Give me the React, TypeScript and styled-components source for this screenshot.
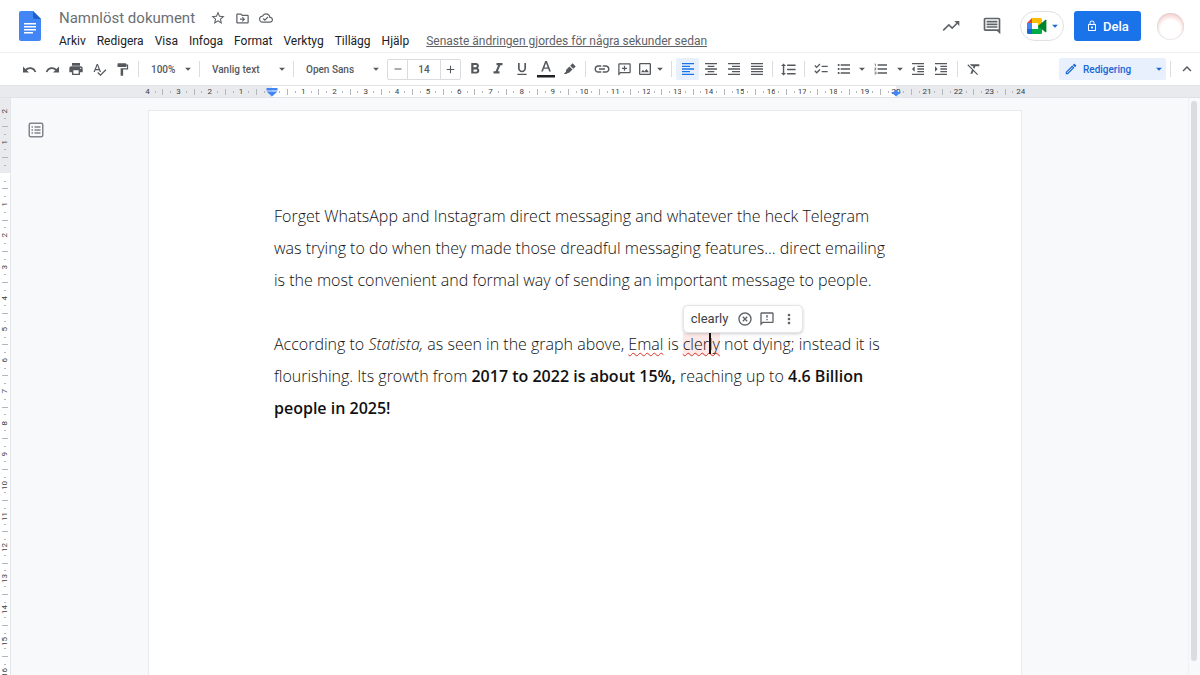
import React from "react";
import styled, { createGlobalStyle, css } from "styled-components";
import {
  MdAdd,
  MdArrowDropDown,
  MdChecklist,
  MdExpandLess,
  MdFormatAlignCenter,
  MdFormatAlignJustify,
  MdFormatAlignLeft,
  MdFormatAlignRight,
  MdFormatBold,
  MdFormatClear,
  MdFormatIndentDecrease,
  MdFormatIndentIncrease,
  MdFormatItalic,
  MdFormatLineSpacing,
  MdFormatListBulleted,
  MdFormatListNumbered,
  MdFormatUnderlined,
  MdHighlightOff,
  MdInsertLink,
  MdLockOutline,
  MdMoreVert,
  MdOutlineCloudDone,
  MdOutlineEdit,
  MdOutlineFeedback,
  MdOutlineImage,
  MdPrint,
  MdRemove,
  MdSpellcheck,
  MdStarBorder,
  MdTrendingUp,
} from "react-icons/md";

const GlobalStyle = createGlobalStyle`
  *, *::before, *::after { box-sizing: border-box; }
  body {
    margin: 0;
    background: #f8f9fb;
    color: #3c4043;
    font-family: Roboto, Arial, sans-serif;
    font-size: 11px;
  }
  button, input, select { font: inherit; color: inherit; }
  button {
    margin: 0;
    padding: 0;
    border: 0;
    background: none;
    cursor: pointer;
  }
  svg { display: block; flex: none; }
`;

const Shell = styled.div`
  display: flex;
  flex-direction: column;
  height: 100vh;
  overflow: hidden;
`;

/* ---------- header ---------- */

const Header = styled.header`
  display: flex;
  align-items: center;
  height: 53px;
  padding: 0 16px 0 19px;
  background: #fff;
  border-bottom: 1px solid #eceef0;
`;

const TitleBlock = styled.div`
  flex: 1;
  display: flex;
  flex-direction: column;
  gap: 4px;
  min-width: 0;
  padding: 6px 0 0 18px;
`;

const TitleRow = styled.div`
  display: flex;
  align-items: center;
  height: 20px;
`;

const Title = styled.h1`
  margin: 0 11px 0 0;
  font-size: 15px;
  line-height: 20px;
  font-weight: 400;
  color: #6b6f74;
`;

const TitleButton = styled.button`
  display: grid;
  place-items: center;
  width: 24px;
  height: 20px;
  color: #5f6368;
`;

const MenuBar = styled.nav`
  display: flex;
  align-items: center;
  gap: 11px;
  white-space: nowrap;
`;

const MenuItem = styled.button`
  font-size: 12px;
  line-height: 18px;
  color: #202124;
`;

const LastEdit = styled.a`
  margin-left: 6px;
  font-size: 12px;
  line-height: 18px;
  color: #5f6368;
  text-decoration: underline;
`;

const HeaderActions = styled.div`
  display: flex;
  align-items: center;
`;

const RoundButton = styled.button`
  display: grid;
  place-items: center;
  width: 41px;
  height: 30px;
  color: #5f6368;
`;

const MeetButton = styled.button`
  display: flex;
  align-items: center;
  justify-content: center;
  gap: 1px;
  width: 44px;
  height: 30px;
  margin: 0 10px 0 8px;
  padding-left: 4px;
  border: 1px solid #dfe1e5;
  border-radius: 15px;
  color: #1967d2;
`;

const ShareButton = styled.button`
  display: flex;
  align-items: center;
  justify-content: center;
  gap: 5px;
  width: 67px;
  height: 30px;
  border-radius: 3px;
  background: #1a73e8;
  color: #fff;
  font-size: 13px;
  font-weight: 500;
`;

const Avatar = styled.button`
  width: 27px;
  height: 27px;
  margin-left: 16px;
  border-radius: 50%;
  background: radial-gradient(circle at 50% 62%, #fff 45%, #f6d5d2 72%, #e9bdb9 100%);
  box-shadow: inset 0 0 2px #c9c4cc;
`;

/* ---------- toolbar ---------- */

const Toolbar = styled.div`
  display: flex;
  align-items: center;
  flex: none;
  height: 32px;
  padding: 0 2px 0 18px;
  background: #fff;
  color: #55595e;
`;

const ToolGroup = styled.div<{ $width?: number }>`
  display: flex;
  align-items: center;
  justify-content: space-between;
  flex: none;
  width: ${(p) => (p.$width ? `${p.$width}px` : "auto")};
`;

const ToolButton = styled.button<{ $active?: boolean }>`
  display: flex;
  align-items: center;
  justify-content: center;
  width: 23px;
  height: 22px;
  border-radius: 2px;
  ${(p) =>
    p.$active &&
    css`
      background: #e8f0fe;
      color: #1a73e8;
    `}
`;

const ArrowButton = styled(ToolButton)`
  width: 14px;
`;

const SplitButton = styled(ToolButton)`
  width: 31px;
`;

const Separator = styled.span`
  flex: none;
  width: 1px;
  height: 16px;
  margin: 0 4px;
  background: #dadce0;
`;

const SelectBox = styled.label<{ $width: number }>`
  position: relative;
  flex: none;
  width: ${(p) => p.$width}px;
  > svg {
    position: absolute;
    right: 0;
    top: 4px;
    pointer-events: none;
  }
`;

const Select = styled.select`
  appearance: none;
  width: 100%;
  height: 22px;
  padding: 0 14px 0 8px;
  border: 0;
  background: none;
  font-size: 10px;
  font-weight: 500;
`;

const SizeBox = styled.div`
  display: flex;
  flex: none;
  height: 21px;
  margin: 0 2px 0 4px;
  border: 1px solid #dadce0;
  border-radius: 2px;
  button {
    display: grid;
    place-items: center;
    width: 19px;
  }
  input {
    width: 34px;
    padding: 0;
    border: 0;
    border-left: 1px solid #dadce0;
    border-right: 1px solid #dadce0;
    background: none;
    text-align: center;
    font-size: 10px;
    font-weight: 500;
  }
`;

const ModeButton = styled.button`
  display: flex;
  align-items: center;
  width: 107px;
  height: 22px;
  margin-left: auto;
  padding: 0 0 0 5px;
  border-radius: 2px;
  background: #e8f0fe;
  color: #1967d2;
  font-size: 10px;
  font-weight: 500;
  span {
    flex: 1;
    padding-left: 5px;
    text-align: left;
  }
`;

/* ---------- rulers ---------- */

const RulerRow = styled.div`
  display: flex;
  justify-content: center;
  flex: none;
  height: 13px;
  padding-right: 32px;
  background: #e8eaed;
  border-top: 1px solid #e0e2e5;
  border-bottom: 1px solid #e0e2e5;
`;

const RulerTrack = styled.div`
  display: flex;
  width: 881px;
  overflow: hidden;
`;

const SideRuler = styled.div`
  flex: none;
  width: 11px;
  padding-top: 9px;
  overflow: hidden;
  background: #e8eaed;
  border-right: 1px solid #e4e6e9;
`;

const SideTrack = styled.div`
  display: flex;
  flex-direction: column;
  height: 593px;
`;

const Slot = styled.span<{ $fill: "page" | "margin" | "enter" | "leave"; $vertical?: boolean }>`
  position: relative;
  display: flex;
  align-items: center;
  justify-content: center;
  flex: 1 1 0;
  min-width: 0;
  min-height: 0;
  font-size: 8px;
  line-height: 10px;
  color: #3c4043;
  white-space: nowrap;
  background: ${(p) => {
    const dir = p.$vertical ? "to bottom" : "to right";
    if (p.$fill === "page") return "#fff";
    if (p.$fill === "enter") return `linear-gradient(${dir}, #e8eaed 50%, #fff 50%)`;
    if (p.$fill === "leave") return `linear-gradient(${dir}, #fff 50%, #e8eaed 50%)`;
    return "transparent";
  }};
  > svg {
    position: absolute;
    top: 0;
    z-index: 1;
  }
`;

const Tick = styled.i<{ $long?: boolean; $vertical?: boolean }>`
  flex: none;
  width: ${(p) => (p.$vertical ? (p.$long ? 6 : 2) : 1)}px;
  height: ${(p) => (p.$vertical ? 1 : p.$long ? 6 : 2)}px;
  background: #b4b7bb;
`;

const TurnedLabel = styled.b`
  flex: none;
  font-weight: 400;
  writing-mode: vertical-rl;
  transform: rotate(180deg);
`;

/* ---------- workspace ---------- */

const Workspace = styled.div`
  flex: 1;
  display: flex;
  min-height: 0;
`;

const Canvas = styled.main`
  flex: 1;
  display: flex;
  justify-content: center;
  min-width: 0;
  padding: 12px 46px 0 0;
  overflow: hidden;
`;

const OutlineRail = styled.div`
  flex: none;
  width: 0;
  overflow: visible;
  padding: 24px 0 0 17px;
  button {
    display: block;
    color: #80868b;
  }
`;

const Page = styled.article`
  flex: 0 1 874px;
  min-height: 1120px;
  padding: 89px 125px;
  background: #fff;
  border: 1px solid #e8eaec;
  font-family: "Open Sans", sans-serif;
  font-size: 16px;
  font-weight: 300;
  line-height: 32px;
  color: #111;
  strong {
    font-weight: 600;
  }
`;

const Paragraph = styled.p`
  margin: 0 0 32px;
`;

const Misspelled = styled.span`
  text-decoration: underline wavy #d93025 1px;
  text-decoration-skip-ink: none;
  text-underline-offset: 2px;
`;

const ActiveWord = styled.span`
  position: relative;
  display: inline-block;
  line-height: 22px;
  background: #fce8e6;
`;

const Caret = styled.span`
  position: absolute;
  top: 0;
  left: 26px;
  width: 2px;
  height: 21px;
  background: #111;
`;

const Suggestion = styled.span`
  position: absolute;
  bottom: 22px;
  left: 0;
  display: flex;
  align-items: center;
  height: 28px;
  padding: 0 2px 0 7px;
  border: 1px solid #e3e5e8;
  border-radius: 5px;
  background: #fff;
  box-shadow: 0 1px 3px rgba(60, 64, 67, 0.25);
  font-family: Roboto, Arial, sans-serif;
  font-weight: 400;
  color: #5f6368;
`;

const SuggestionWord = styled.button`
  margin-right: 6px;
  font-size: 13px;
  color: #3c4043;
`;

const SuggestionIcon = styled.button`
  display: grid;
  place-items: center;
  width: 22px;
  height: 22px;
`;

const ScrollTrack = styled.div`
  flex: none;
  width: 12px;
  padding: 3px 3px 14px 2px;
  border-left: 1px solid #f0f1f3;
`;

const ScrollThumb = styled.div`
  height: 100%;
  border-radius: 4px;
  background: #dadce0;
`;

/* ---------- drawings ---------- */

const DocsLogo = () => (
  <svg width="22" height="30" viewBox="0 0 22 30" aria-label="Dokument">
    <path d="M2 0h12l8 8v20a2 2 0 0 1-2 2H2a2 2 0 0 1-2-2V2a2 2 0 0 1 2-2z" fill="#4285f4" />
    <path d="M14 0l8 8h-6a2 2 0 0 1-2-2z" fill="#1b62cf" />
    <path d="M5 12h12v1.500H5zM5 15h12v1.500H5zM5 18h12v1.500H5zM5 21h9v1.500H5z" fill="#fff" />
  </svg>
);

const MeetLogo = () => (
  <svg width="20" height="16" viewBox="0 0 20 16">
    <path d="M0 5L5 0v5z" fill="#ea4335" />
    <path d="M5 0h8.500A1.500 1.500 0 0 1 15 1.500V6l-4 2V5H5z" fill="#fbbc04" />
    <path d="M0 5h5v6H0z" fill="#4285f4" />
    <path d="M0 11h5v5H1.500A1.500 1.500 0 0 1 0 14.500z" fill="#1967d2" />
    <path d="M5 11h6V8l4-3v9.500a1.500 1.500 0 0 1-1.500 1.500H5z" fill="#00ac47" />
    <path d="M11 8l7.400-6.200c.4-.3 1-.1 1 .5v11.400c0 .6-.6.800-1 .5z" fill="#00832d" />
    <path d="M5 5h6v6H5z" fill="#fff" />
  </svg>
);

const UndoIcon = ({ flip }: { flip?: boolean }) => (
  <svg width="15" height="15" viewBox="0 0 15 15">
    <g transform={flip ? "matrix(-1 0 0 1 15 0)" : undefined}>
      <path d="M1 4.500v6h6z" fill="currentColor" />
      <path
        d="M3.500 8.200C6.500 5 11.500 5.300 13.500 10"
        fill="none"
        stroke="currentColor"
        strokeWidth="1.700"
      />
    </g>
  </svg>
);

const FolderMoveIcon = () => (
  <svg width="15" height="15" viewBox="0 0 24 24" fill="currentColor">
    <path d="M20 6h-8l-2-2H4c-1.100 0-2 .9-2 2v12c0 1.100.9 2 2 2h16c1.100 0 2-.9 2-2V8c0-1.100-.9-2-2-2zm0 12H4V6h5.200l2 2H20v10zM12.200 17l4-4-4-4-1.200 1.200 1.900 1.900H8v1.800h4.900L11 15.800z" />
  </svg>
);

const CommentsIcon = () => (
  <svg width="20" height="20" viewBox="0 0 24 24" fill="currentColor">
    <path d="M22 4c0-1.100-.9-2-2-2H4c-1.100 0-2 .9-2 2v12c0 1.100.9 2 2 2h14l4 4V4zm-2 12.500L19.500 16H4V4h16v12.500zM5.500 5.800h13v2h-13zM5.500 9h13v2h-13zM5.500 12.200h13v2h-13z" />
  </svg>
);

const PaintRollerIcon = () => (
  <svg width="15" height="15" viewBox="0 0 24 24" fill="currentColor">
    <path d="M18 4V3c0-.55-.45-1-1-1H5c-.55 0-1 .45-1 1v4c0 .55.45 1 1 1h12c.55 0 1-.45 1-1V6h1v4H9v11c0 .55.45 1 1 1h2c.55 0 1-.45 1-1v-9h8V4h-3z" />
  </svg>
);

const TextColorIcon = () => (
  <svg width="18" height="18" viewBox="0 0 18 18">
    <path d="M0 15h18v2.500H0z" fill="#202124" />
    <path
      d="M8.200 1h1.700l4 10.500h-1.700l-1-2.700H6.900l-1 2.700H4.200zm-.8 6.400h3.300L9.050 2.900z"
      fill="#55595e"
    />
  </svg>
);

const HighlighterIcon = () => (
  <svg width="15" height="15" viewBox="0 0 15 15" fill="currentColor">
    <path d="M10.600 1.300l3.100 3.100-2.500 2.400-3-3z" />
    <path d="M7.400 4.500l3.100 3.100-3.300 3.200-1.500.1-1.200 1.100H1.800l2.300-2.400-.1-1.700z" />
  </svg>
);

const AddCommentIcon = () => (
  <svg width="15" height="15" viewBox="0 0 24 24" fill="currentColor">
    <path d="M20 2H4c-1.100 0-2 .9-2 2v18l4-4h14c1.100 0 2-.9 2-2V4c0-1.100-.9-2-2-2zm0 14H5.200L4 17.200V4h16v12zM11 14h2v-3h3V9h-3V6h-2v3H8v2h3z" />
  </svg>
);

const OutlineIcon = () => (
  <svg width="16" height="16" viewBox="0 0 16 16" fill="none" stroke="currentColor">
    <rect x="1.250" y="1.250" width="13.500" height="13.500" rx="1.500" strokeWidth="1.500" />
    <path d="M6.500 5h6M6.500 8h6M6.500 11h6M3.500 5h1.500M3.500 8h1.500M3.500 11h1.500" strokeWidth="1.300" />
  </svg>
);

const IndentMarker = ({ full }: { full?: boolean }) => (
  <svg width="12" height="11" viewBox="0 0 12 11" fill="#4285f4">
    {full && <path d="M.5 2h11v2.500H.5z" />}
    <path d={full ? "M.5 5.500h11L6 10.500z" : "M4.500 4h3v2H11l-5 4.500L1 6h3.500z"} />
  </svg>
);

/* ---------- ruler building ---------- */

function RulerSlots({
  before,
  count,
  end,
  vertical,
}: {
  before: number;
  count: number;
  end: number;
  vertical?: boolean;
}) {
  const slots = Array.from({ length: count }, (_, i) => {
    const pos = i / 4 - before;
    const fill =
      pos === 0 ? "enter" : pos === end ? "leave" : pos > 0 && pos < end ? "page" : "margin";
    const quarter = i % 4;
    const label = Math.abs(pos);
    return (
      <Slot key={i} $fill={fill} $vertical={vertical}>
        {quarter === 0 && pos !== 0 && (vertical ? <TurnedLabel>{label}</TurnedLabel> : label)}
        {quarter !== 0 && <Tick $long={quarter === 2} $vertical={vertical} />}
        {!vertical && pos === 0 && <IndentMarker full />}
        {!vertical && pos === end && <IndentMarker />}
      </Slot>
    );
  });
  return <>{slots}</>;
}

const menus = ["Arkiv", "Redigera", "Visa", "Infoga", "Format", "Verktyg", "Tillägg", "Hjälp"];

function Dropdown({ label, value, width }: { label: string; value: string; width: number }) {
  return (
    <SelectBox $width={width}>
      <Select aria-label={label} defaultValue={value}>
        <option>{value}</option>
      </Select>
      <MdArrowDropDown size={14} />
    </SelectBox>
  );
}

export default function App() {
  return (
    <Shell>
      <GlobalStyle />
      <Header>
        <DocsLogo />
        <TitleBlock>
          <TitleRow>
            <Title>Namnlöst dokument</Title>
            <TitleButton aria-label="Stjärnmärk"><MdStarBorder size={16} /></TitleButton>
            <TitleButton aria-label="Flytta"><FolderMoveIcon /></TitleButton>
            <TitleButton aria-label="Sparat"><MdOutlineCloudDone size={14} /></TitleButton>
          </TitleRow>
          <MenuBar>
            {menus.map((m) => (
              <MenuItem key={m}>{m}</MenuItem>
            ))}
            <LastEdit href="#historik">Senaste ändringen gjordes för några sekunder sedan</LastEdit>
          </MenuBar>
        </TitleBlock>
        <HeaderActions>
          <RoundButton aria-label="Aktivitet"><MdTrendingUp size={20} /></RoundButton>
          <RoundButton aria-label="Kommentarer"><CommentsIcon /></RoundButton>
          <MeetButton aria-label="Meet">
            <MeetLogo />
            <MdArrowDropDown size={14} />
          </MeetButton>
          <ShareButton>
            <MdLockOutline size={12} />
            Dela
          </ShareButton>
          <Avatar aria-label="Konto" />
        </HeaderActions>
      </Header>

      <Toolbar role="toolbar">
        <ToolGroup $width={116}>
          <ToolButton aria-label="Ångra"><UndoIcon /></ToolButton>
          <ToolButton aria-label="Gör om"><UndoIcon flip /></ToolButton>
          <ToolButton aria-label="Skriv ut"><MdPrint size={16} /></ToolButton>
          <ToolButton aria-label="Stavning"><MdSpellcheck size={15} /></ToolButton>
          <ToolButton aria-label="Kopiera format"><PaintRollerIcon /></ToolButton>
        </ToolGroup>
        <Separator />
        <Dropdown label="Zooma" value="100%" width={52} />
        <Separator />
        <Dropdown label="Format" value="Vanlig text" width={85} />
        <Separator />
        <Dropdown label="Teckensnitt" value="Open Sans" width={85} />
        <SizeBox>
          <button aria-label="Minska"><MdRemove size={12} /></button>
          <input aria-label="Teckenstorlek" defaultValue="14" />
          <button aria-label="Öka"><MdAdd size={13} /></button>
        </SizeBox>
        <ToolGroup $width={118}>
          <ToolButton aria-label="Fetstil"><MdFormatBold size={18} /></ToolButton>
          <ToolButton aria-label="Kursiv"><MdFormatItalic size={18} /></ToolButton>
          <ToolButton aria-label="Understrykning"><MdFormatUnderlined size={16} /></ToolButton>
          <ToolButton aria-label="Textfärg"><TextColorIcon /></ToolButton>
          <ToolButton aria-label="Markering"><HighlighterIcon /></ToolButton>
        </ToolGroup>
        <Separator />
        <ToolGroup>
          <ToolButton aria-label="Länk"><MdInsertLink size={18} /></ToolButton>
          <ToolButton aria-label="Kommentar"><AddCommentIcon /></ToolButton>
          <SplitButton aria-label="Bild">
            <MdOutlineImage size={16} />
            <MdArrowDropDown size={14} />
          </SplitButton>
        </ToolGroup>
        <Separator />
        <ToolGroup>
          <ToolButton $active aria-label="Vänsterjustera"><MdFormatAlignLeft size={16} /></ToolButton>
          <ToolButton aria-label="Centrera"><MdFormatAlignCenter size={16} /></ToolButton>
          <ToolButton aria-label="Högerjustera"><MdFormatAlignRight size={16} /></ToolButton>
          <ToolButton aria-label="Marginaljustera"><MdFormatAlignJustify size={16} /></ToolButton>
        </ToolGroup>
        <Separator />
        <ToolButton aria-label="Radavstånd"><MdFormatLineSpacing size={17} /></ToolButton>
        <Separator />
        <ToolGroup $width={144}>
          <ToolButton aria-label="Checklista"><MdChecklist size={16} /></ToolButton>
          <ToolButton aria-label="Punktlista"><MdFormatListBulleted size={16} /></ToolButton>
          <ArrowButton aria-label="Punktval"><MdArrowDropDown size={14} /></ArrowButton>
          <ToolButton aria-label="Numrerad lista"><MdFormatListNumbered size={16} /></ToolButton>
          <ArrowButton aria-label="Nummerval"><MdArrowDropDown size={14} /></ArrowButton>
          <ToolButton aria-label="Minska indrag"><MdFormatIndentDecrease size={16} /></ToolButton>
          <ToolButton aria-label="Öka indrag"><MdFormatIndentIncrease size={16} /></ToolButton>
        </ToolGroup>
        <Separator />
        <ToolButton aria-label="Rensa format"><MdFormatClear size={16} /></ToolButton>
        <ModeButton>
          <MdOutlineEdit size={14} />
          <span>Redigering</span>
          <MdArrowDropDown size={14} />
        </ModeButton>
        <Separator />
        <ToolButton aria-label="Dölj menyer"><MdExpandLess size={18} /></ToolButton>
      </Toolbar>

      <RulerRow>
        <RulerTrack>
          <RulerSlots before={4} count={113} end={20} />
        </RulerTrack>
      </RulerRow>

      <Workspace>
        <SideRuler>
          <SideTrack>
            <RulerSlots before={2} count={76} end={25} vertical />
          </SideTrack>
        </SideRuler>
        <OutlineRail>
          <button aria-label="Visa disposition"><OutlineIcon /></button>
        </OutlineRail>
        <Canvas>
          <Page>
            <Paragraph>
              Forget WhatsApp and Instagram direct messaging and whatever the heck Telegram was
              trying to do when they made those dreadful messaging features... direct emailing is
              the most convenient and formal way of sending an important message to people.
            </Paragraph>
            <Paragraph>
              According to <em>Statista,</em> as seen in the graph above,{" "}
              <Misspelled>Emal</Misspelled> is{" "}
              <ActiveWord>
                <Misspelled>clerly</Misspelled>
                <Caret />
                <Suggestion>
                  <SuggestionWord>clearly</SuggestionWord>
                  <SuggestionIcon aria-label="Ignorera"><MdHighlightOff size={16} /></SuggestionIcon>
                  <SuggestionIcon aria-label="Feedback"><MdOutlineFeedback size={16} /></SuggestionIcon>
                  <SuggestionIcon aria-label="Mer"><MdMoreVert size={16} /></SuggestionIcon>
                </Suggestion>
              </ActiveWord>{" "}
              not dying; instead it is flourishing. Its growth from{" "}
              <strong>2017 to 2022 is about 15%,</strong> reaching up to{" "}
              <strong>4.6 Billion people in 2025!</strong>
            </Paragraph>
          </Page>
        </Canvas>
        <ScrollTrack>
          <ScrollThumb />
        </ScrollTrack>
      </Workspace>
    </Shell>
  );
}
